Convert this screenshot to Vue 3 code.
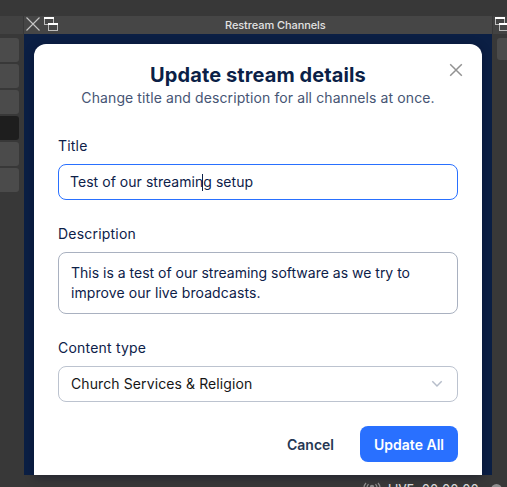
<script setup>
const sourceRows = [false, false, false, true, false, false]
</script>

<template>
  <div class="window">
    <div class="topbar"></div>
    <div class="workspace">
      <aside class="left">
        <div class="strip"></div>
        <div class="rows">
          <div v-for="(active, i) in sourceRows" :key="i" class="row" :class="{ active }"></div>
        </div>
      </aside>

      <section class="dock">
        <header class="dock-bar">
          <svg class="dock-icons" width="34" height="18" viewBox="0 0 34 18" fill="none">
            <path d="M2.500 1.500L15.500 14.500M15.500 1.500L2.500 14.500" stroke="#c6c6c6" stroke-width="1.100" />
            <rect x="20.500" y="1.500" width="9" height="7" stroke="#bdbdbd" />
            <path d="M20 2h10" stroke="#fff" stroke-width="2" />
            <rect x="24.500" y="7.500" width="9" height="7" fill="#464646" stroke="#bdbdbd" />
            <path d="M24 8h10" stroke="#fff" stroke-width="2" />
          </svg>
          <span class="dock-title">Restream Channels</span>
        </header>
        <div class="dock-body">
          <div class="modal">
            <div class="head">
              <h1>Update stream details</h1>
              <p>Change title and description for all channels at once.</p>
              <svg class="close" width="14" height="14" viewBox="0 0 14 14">
                <path d="M1.200 1.200L12.800 12.800M12.800 1.200L1.200 12.800" stroke="#929292" stroke-width="1.500" />
              </svg>
            </div>
            <label class="l-title">Title</label>
            <div class="field title-field"><span class="t-in">Test of our streamin<i class="caret"></i>g setup</span></div>
            <label class="l-desc">Description</label>
            <div class="field area"><span class="t-a1">This is a test of our streaming software as we try to</span><span class="t-a2">improve our live broadcasts.</span></div>
            <label class="l-type">Content type</label>
            <div class="field select">
              <span class="t-sel">Church Services &amp; Religion</span>
              <svg width="12" height="8" viewBox="0 0 12 8" fill="none"><path d="M1.300 1.300L6 6L10.700 1.300" stroke="#b6bdca" stroke-width="1.500" /></svg>
            </div>
            <div class="actions">
              <span class="cancel">Cancel</span>
              <div class="update"><span>Update All</span></div>
            </div>
          </div>
        </div>
      </section>

      <aside class="right">
        <div class="strip">
          <svg width="14" height="18" viewBox="0 0 14 18" fill="none">
            <rect x="2.500" y="1.500" width="9" height="7" stroke="#bdbdbd" />
            <path d="M2 2h10" stroke="#fff" stroke-width="2" />
            <rect x="6.500" y="7.500" width="9" height="7" fill="#464646" stroke="#bdbdbd" />
            <path d="M6 8h10" stroke="#fff" stroke-width="2" />
          </svg>
        </div>
        <div class="tile"></div>
      </aside>
    </div>
    <footer class="status">
      <svg width="18" height="14" viewBox="0 0 18 14" fill="none" stroke="#8b8b8b" stroke-width="1.200">
        <path d="M3 1C.2 4 .2 9 3 12M5.500 2.200C3.600 4.500 3.600 8 5.500 10.500M15 1c2.800 3 2.800 8 0 11M12.500 2.200c1.900 2.300 1.900 5.800 0 8.300" />
        <circle cx="9" cy="5" r="2.200" fill="#8b8b8b" stroke="none" />
      </svg>
      <span class="live">LIVE</span>
      <span class="time">00:00:00</span>
      <i class="dot"></i>
    </footer>
  </div>
</template>

<style>
body { margin: 0; overflow: hidden; background: #383838; }
</style>

<style scoped>
* { box-sizing: border-box; }
.window { width: 507px; height: 487px; overflow: hidden; display: flex; flex-direction: column; background: #383838; font-family: Inter, "Liberation Sans", sans-serif; color: #0d2149; }
.topbar { height: 16px; flex: none; }
.workspace { display: flex; height: 459px; flex: none; }
.left { width: 24px; }
.strip { height: 18px; background: #424242; }
.left .strip { width: 23px; }
.rows { display: flex; flex-direction: column; gap: 2px; padding-top: 4px; }
.row { width: 19px; height: 24px; background: #4b4b4b; border-radius: 0 3px 3px 0; }
.row.active { background: #1e1e1e; }
.dock { width: 468px; display: flex; flex-direction: column; }
.dock-bar { height: 18px; background: #464646; display: flex; position: relative; }
.dock-icons { flex: none; display: block; }
.dock-title { margin-left: 167px; font-size: 11px; line-height: 18px; font-weight: 500; color: #e2e2e2; white-space: nowrap; letter-spacing: -.08px; }
.dock-body { flex: 1; padding: 10px 10px 0; background: #0b1f44; display: flex; }
.modal { width: 448px; height: 431px; padding: 19px 24px 0; background: #fff; border-radius: 12px 12px 0 0; display: flex; flex-direction: column; box-shadow: 0 2px 10px #00082266; }
.head { position: relative; height: 71px; text-align: center; white-space: nowrap; flex: none; }
h1 { margin: 0; font-size: 20px; line-height: 24px; font-weight: 700; color: #0b1f47; letter-spacing: .1px; }
p { margin: 0; font-size: 14px; line-height: 21px; color: #465574; letter-spacing: .1px; }
.close { position: absolute; left: 391px; top: 0; }
label { font-size: 14px; line-height: 20px; height: 20px; flex: none; white-space: nowrap; letter-spacing: .2px; }
.l-title { margin-top: 2px; }
.field { border: 1px solid #a9b1c0; border-radius: 8px; font-size: 14px; line-height: 20px; white-space: nowrap; flex: none; }
.field span { display: block; width: max-content; }
.title-field { height: 36px; margin-top: 8px; padding: 7px 11px; border-color: #2970ff; }
.t-in { letter-spacing: .04px; }
.caret { display: inline-block; width: 1px; height: 17px; margin: 0 0 0 -1px; background: #0d2149; vertical-align: -4px; }
.l-desc { margin-top: 24px; }
.area { height: 62px; margin-top: 8px; padding: 10px 12px; }
.t-a2 { letter-spacing: .08px; }
.l-type { margin-top: 24px; }
.select { height: 36px; margin-top: 8px; padding: 0 14px 0 12px; border-color: #bcc3cf; color: #161616; display: flex; align-items: center; justify-content: space-between; }
.t-sel { letter-spacing: .1px; }
.actions { display: flex; height: 36px; margin-top: 24px; justify-content: flex-end; align-items: center; font-size: 14px; font-weight: 600; white-space: nowrap; }
.cancel { margin-right: 26px; color: #263753; }
.update { width: 98px; height: 36px; display: flex; align-items: center; justify-content: center; border-radius: 8px; background: #2970ff; color: #fff; }
.right { width: 15px; padding-left: 1px; }
.right .strip svg { display: block; }
.tile { width: 12px; height: 22px; margin: 4px 0 0 4px; background: #4b4b4b; border-radius: 3px 0 0 3px; }
.status { height: 12px; padding: 7px 0 0 363px; display: flex; align-items: flex-start; overflow: hidden; font-size: 12px; line-height: 14px; font-weight: 500; color: #d4d4d4; }
.status > * { flex: none; }
.live { margin-left: 7px; width: 34px; letter-spacing: .1px; }
.time { width: 70px; font-variant-numeric: tabular-nums; letter-spacing: .5px; }
.dot { width: 11px; height: 11px; margin-left: -1px; margin-top: 2px; border-radius: 50%; background: #8e8e8e; }
</style>
